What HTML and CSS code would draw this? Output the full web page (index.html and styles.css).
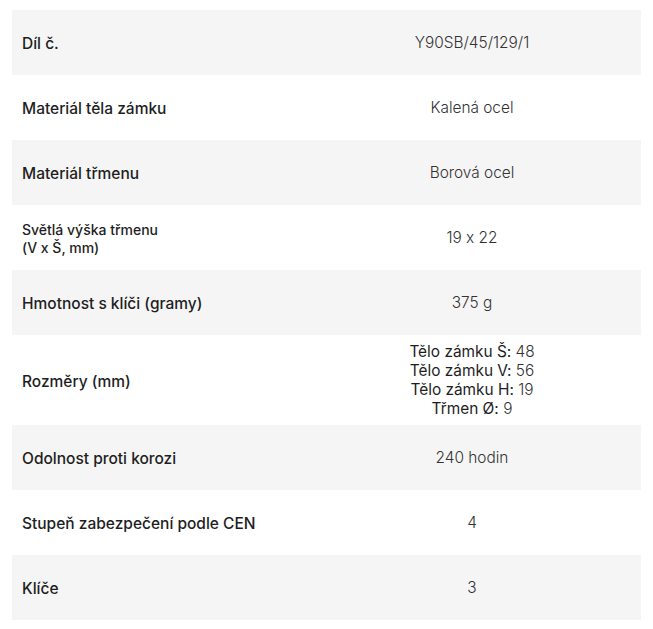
FILE: index.html
```html
<!DOCTYPE html>
<html lang="cs">
<head>
<meta charset="utf-8">
<link rel="stylesheet" href="styles.css">
</head>
<body>
<table class="specs">
  <tbody>
    <tr><th>Díl č.</th><td>Y90SB/45/129/1</td></tr>
    <tr><th>Materiál těla zámku</th><td>Kalená ocel</td></tr>
    <tr><th>Materiál třmenu</th><td>Borová ocel</td></tr>
    <tr><th class="small">Světlá výška třmenu<br>(V x Š, mm)</th><td>19 x 22</td></tr>
    <tr><th>Hmotnost s klíči (gramy)</th><td>375 g</td></tr>
    <tr><th>Rozměry (mm)</th><td class="dims"><b>Tělo zámku Š:</b> 48<br><b>Tělo zámku V:</b> 56<br><b>Tělo zámku H:</b> 19<br><b>Třmen Ø:</b> 9</td></tr>
    <tr><th>Odolnost proti korozi</th><td>240 hodin</td></tr>
    <tr><th>Stupeň zabezpečení podle CEN</th><td>4</td></tr>
    <tr><th>Klíče</th><td>3</td></tr>
  </tbody>
</table>
</body>
</html>
```
FILE: styles.css
```css
html, body {
  margin: 0;
  padding: 0;
  background: #fff;
}
body {
  padding: 10px 12px 0 12px;
}
.specs {
  width: 629px;
  border-collapse: collapse;
  font-family: Inter, "Liberation Sans", Arial, sans-serif;
  font-feature-settings: "calt" 0;
}
.specs tr {
  height: 65px;
}
.specs tr:nth-child(odd) {
  background: #f5f5f5;
}
.specs th {
  width: 271px;
  padding: 8px 10px 6px 10px;
  text-align: left;
  vertical-align: middle;
  font-size: 15.5px;
  font-weight: 500;
  color: #1e1e1e;
  line-height: 19px;
}
.specs th.small {
  font-size: 14px;
  line-height: 18px;
}
.specs td {
  padding: 7px 10px;
  text-align: center;
  vertical-align: middle;
  font-size: 15.4px;
  font-weight: 300;
  color: #333;
  line-height: 19px;
}
.specs td.dims b {
  font-weight: 400;
  color: #1e1e1e;
}
```
